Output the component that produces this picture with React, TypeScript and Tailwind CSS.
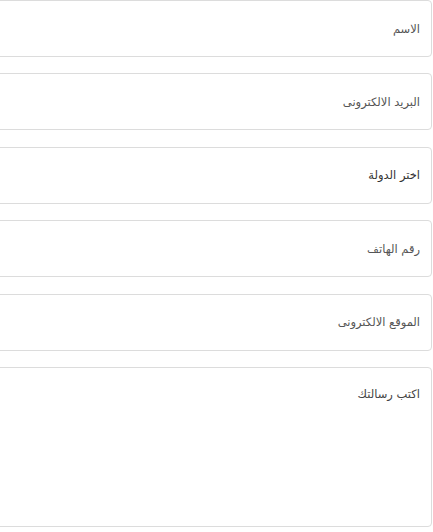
const fields = [
  { label: "الاسم", type: "input" },
  { label: "البريد الالكترونى", type: "input" },
  { label: "اختر الدولة", type: "select" },
  { label: "رقم الهاتف", type: "input" },
  { label: "الموقع الالكترونى", type: "input" },
];

export default function App() {
  return (
    <div
      dir="rtl"
      className="w-[433px] h-[532px] overflow-hidden bg-white pr-px"
      style={{ fontFamily: '"DejaVu Sans", "Noto Sans", sans-serif' }}
    >
      <form className="flex w-[480px] flex-col gap-[16.4px]">
        {fields.map((f) =>
          f.type === "select" ? (
            <div
              key={f.label}
              className="flex h-[57px] items-center rounded border border-[#dcdcdc] px-[11px] text-[11.5px] text-[#333]"
            >
              {f.label}
            </div>
          ) : (
            <input
              key={f.label}
              placeholder={f.label}
              className="h-[57px] rounded border border-[#dcdcdc] px-[11px] text-[11.5px] text-[#444] placeholder-[#555] outline-none"
            />
          )
        )}
        <textarea
          placeholder="اكتب رسالتك"
          className="h-[160px] resize-none rounded border border-[#dcdcdc] px-[11px] pt-[18px] text-[11.5px] text-[#444] placeholder-[#444] outline-none"
        />
      </form>
    </div>
  );
}
